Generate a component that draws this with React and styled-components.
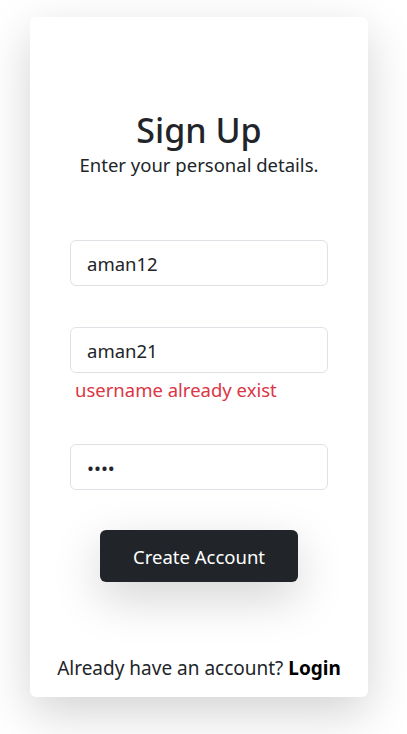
import styled, { createGlobalStyle } from "styled-components";

const Global = createGlobalStyle`
    body {
        margin: 0;
        background: #fff;
        font-family: "Noto Sans", "Open Sans", sans-serif;
        color: #212529;
    }
`;

export default function App() {
    return (
        <Page>
            <Global />
            <Card>
                <Title>Sign Up</Title>
                <SubTitle>Enter your personal details.</SubTitle>

                <Form onSubmit={(e) => e.preventDefault()}>
                    <Field>
                        <Input type="text" defaultValue="aman12" />
                    </Field>
                    <Field>
                        <Input type="text" defaultValue="aman21" />
                        <Error>username already exist</Error>
                    </Field>
                    <Field>
                        <Input type="password" defaultValue="1234" />
                    </Field>
                    <Button type="submit">Create Account</Button>
                </Form>

                <Footer>
                    Already have an account? <LoginLink href="#">Login</LoginLink>
                </Footer>
            </Card>
        </Page>
    );
}

const Page = styled.div`
    padding: 17px 39px 37px 30px;
`;

const Card = styled.div`
    display: flex;
    flex-direction: column;
    align-items: center;
    height: 680px;
    box-sizing: border-box;
    padding: 92px 40px 0;
    background: #fff;
    border-radius: 6px;
    box-shadow: 0 1rem 3rem rgba(0, 0, 0, 0.175);
`;

const Title = styled.h1`
    margin: 0;
    font-size: 34px;
    font-weight: 500;
    line-height: 42px;
`;

const SubTitle = styled.p`
    margin: 0;
    font-size: 18.5px;
    line-height: 27px;
`;

const Form = styled.form`
    display: flex;
    flex-direction: column;
    align-items: center;
    width: 100%;
    margin-top: 62px;
`;

const Field = styled.div`
    width: 100%;
    margin-bottom: 41px;

    &:last-of-type {
        margin-bottom: 40px;
    }
`;

const Input = styled.input`
    display: block;
    width: 100%;
    height: 46px;
    box-sizing: border-box;
    padding: 0 16px;
    font-family: inherit;
    font-size: 18.5px;
    color: #212529;
    background: #fff;
    border: 1px solid #dee2e6;
    border-radius: 6px;
    outline: none;
`;

const Error = styled.div`
    margin-top: 3px;
    padding-left: 5px;
    font-size: 18.5px;
    line-height: 27px;
    color: #dc3545;
`;

const Button = styled.button`
    width: 198px;
    height: 52px;
    font-family: inherit;
    font-size: 18.5px;
    color: #fff;
    background: #212529;
    border: none;
    border-radius: 6px;
    box-shadow: 0 1rem 3rem rgba(0, 0, 0, 0.175);
    cursor: pointer;
`;

const Footer = styled.p`
    margin: auto -20px 15px;
    font-size: 19px;
    line-height: 27px;
    white-space: nowrap;
`;

const LoginLink = styled.a`
    color: #000;
    font-weight: 700;
    text-decoration: none;
`;
